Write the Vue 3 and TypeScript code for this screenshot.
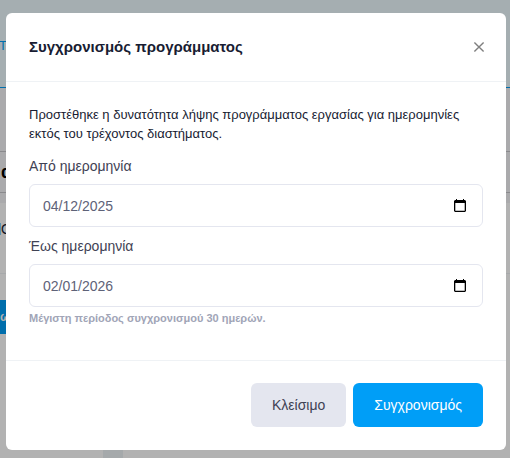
<script setup lang="ts">
import { ref } from 'vue'

interface DateField {
  id: string
  label: string
  value: string
}

const open = ref(true)
const fields = ref<DateField[]>([
  { id: 'date-from', label: 'Από ημερομηνία', value: '04/12/2025' },
  { id: 'date-to', label: 'Έως ημερομηνία', value: '02/01/2026' },
])

function close() {
  open.value = false
}
</script>

<template>
  <div class="screen">
    <div class="page" aria-hidden="true">
      <div class="tabs"><span class="tab">ΕΤ</span></div>
      <div class="toolbar"><div class="heading">α</div></div>
      <div class="card-head"><span class="mark"></span><span>Ο</span></div>
      <div class="card-body"><span class="action">ω</span></div>
      <div class="columns"><div class="gutter"></div></div>
    </div>

    <div v-if="open" class="backdrop">
      <form class="modal" role="dialog" aria-labelledby="modal-title" @submit.prevent="close">
        <header class="modal-header">
          <h2 id="modal-title">Συγχρονισμός προγράμματος</h2>
          <button type="button" class="close" aria-label="Κλείσιμο" @click="close">
            <svg width="12" height="12" viewBox="0 0 12 12">
              <path d="M1.4 1.4L10.6 10.6M10.6 1.4L1.4 10.6" fill="none" stroke="#7f7f7f" stroke-width="1.4" />
            </svg>
          </button>
        </header>

        <div class="modal-body">
          <p class="intro">
            Προστέθηκε η δυνατότητα λήψης προγράμματος εργασίας για ημερομηνίες εκτός του τρέχοντος
            διαστήματος.
          </p>
          <div v-for="field in fields" :key="field.id" class="field">
            <label :for="field.id">{{ field.label }}</label>
            <div class="control">
              <input :id="field.id" v-model="field.value" type="text" inputmode="numeric" />
              <button type="button" class="picker" :aria-label="field.label">
                <svg width="12" height="13" viewBox="0 0 12 13">
                  <path d="M2 0h1v1h6V0h1v1h1l1 1v10l-1 1H1l-1-1V2l1-1h1zM1.3 4v7.8h9.4V4z" fill="#000" fill-rule="evenodd" />
                </svg>
              </button>
            </div>
          </div>
          <p class="hint">Μέγιστη περίοδος συγχρονισμού 30 ημερών.</p>
        </div>

        <footer class="modal-footer">
          <button type="button" class="btn btn-light" @click="close">Κλείσιμο</button>
          <button type="submit" class="btn btn-primary">Συγχρονισμός</button>
        </footer>
      </form>
    </div>
  </div>
</template>

<style>
body {
  margin: 0;
}
</style>

<style scoped>
.screen {
  display: grid;
  min-height: 100vh;
  font-family: "Liberation Sans", Arial, sans-serif;
  font-size: 14px;
  color: #181c32;
}

.page,
.backdrop {
  grid-area: 1 / 1;
  min-width: 0;
}

.page {
  display: flex;
  flex-direction: column;
  overflow: hidden;
  background: #fff;
}

.tabs {
  display: flex;
  align-items: center;
  box-sizing: border-box;
  height: 88px;
  padding-top: 4px;
  background: #edfafe;
  border-bottom: 1px solid #009ef7;
  color: #009ef7;
  font-size: 13px;
}

.tab {
  display: flex;
  justify-content: flex-end;
  width: 7px;
}

.toolbar {
  box-sizing: border-box;
  height: 115px;
  padding-top: 63px;
  background: #f4f4f7;
}

.heading {
  height: 40px;
  padding-left: 1px;
  border: solid #c6c6ca;
  border-width: 1px 0;
  font-size: 18px;
  font-weight: 700;
  line-height: 40px;
  color: #000;
}

.card-head {
  display: flex;
  align-items: center;
  box-sizing: border-box;
  height: 71px;
  padding-bottom: 18px;
  border-bottom: 1px solid #eff2f5;
}

.mark {
  width: 1px;
  height: 12px;
  background: #7fd0fb;
}

.card-body {
  padding-top: 26px;
}

.action {
  display: block;
  width: 80px;
  background: #009ef7;
  color: #fff;
  font-size: 12px;
  font-weight: 700;
  line-height: 34px;
}

.columns {
  display: flex;
  flex: 1;
  padding-left: 103px;
}

.gutter {
  width: 20px;
  background: #edf2f5;
}

.backdrop {
  z-index: 1;
  display: flex;
  align-items: flex-start;
  justify-content: center;
  box-sizing: border-box;
  padding: 13px 4px 8px 6px;
  background: rgba(0, 0, 0, 0.3);
}

.modal {
  width: 100%;
  max-width: 500px;
  background: #fff;
  border-radius: 6px;
}

.modal-header {
  display: flex;
  align-items: center;
  justify-content: space-between;
  padding: 22px 19px 22px 23px;
  border-bottom: 1px solid #eff2f5;
}

h2 {
  margin: 0;
  font-size: 15px;
  font-weight: 700;
  line-height: 24px;
}

button {
  font: inherit;
  cursor: pointer;
}

.close,
.picker {
  display: grid;
  place-items: center;
  padding: 0;
  border: 0;
  background: none;
}

.close {
  width: 16px;
  height: 24px;
}

.modal-body {
  padding: 23px 23px 34px;
}

.intro {
  margin: 0 0 13px;
  font-size: 13px;
  line-height: 19px;
}

.field {
  margin-bottom: 9px;
}

.field label {
  display: block;
  margin-bottom: 7px;
  line-height: 21px;
  color: #3f4254;
}

.control {
  display: flex;
  align-items: center;
  box-sizing: border-box;
  height: 43px;
  padding: 0 16px 0 13px;
  border: 1px solid #e4e6ef;
  border-radius: 6px;
}

.control input {
  flex: 1;
  min-width: 0;
  padding: 0;
  border: 0;
  outline: 0;
  background: none;
  font: inherit;
  color: #5e6278;
}

.hint {
  margin: -6px 0 0;
  font-size: 11px;
  font-weight: 700;
  line-height: 16px;
  color: #a1a5b7;
}

.modal-footer {
  display: flex;
  justify-content: flex-end;
  gap: 7px;
  padding: 22px 23px 23px;
  border-top: 1px solid #eff2f5;
}

.btn {
  padding: 0 21px;
  border: 0;
  border-radius: 6px;
  line-height: 44px;
}

.btn-light {
  background: #e4e6ef;
  color: #3f4254;
}

.btn-primary {
  background: #009ef7;
  color: #fff;
}
</style>
